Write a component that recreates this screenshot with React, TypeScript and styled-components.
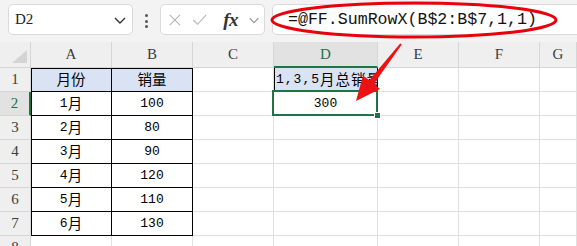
import React from "react";
import styled, { createGlobalStyle, css } from "styled-components";

const GREEN = "#217346";

const GlobalStyle = createGlobalStyle`
  html, body {
    margin: 0;
    padding: 0;
    background: #fff;
    overflow: hidden;
  }
  body {
    font-family: "Liberation Sans", "Noto Sans CJK SC", sans-serif;
  }
`;

const Page = styled.div`
  position: relative;
  width: 577px;
  height: 246px;
  overflow: hidden;
  background: #fff;
`;

/* ---------- formula bar ---------- */

const Toolbar = styled.div`
  display: flex;
  align-items: flex-start;
  height: 42px;
  padding: 4px 0 0 8px;
  box-sizing: border-box;
  background: #f3f3f3;
`;

const Box = styled.div`
  height: 31px;
  box-sizing: border-box;
  background: #fff;
  border: 1px solid #dadada;
  border-radius: 5px;
  display: flex;
  align-items: center;
`;

const NameBox = styled(Box)`
  width: 125px;
  padding: 0 5px 0 6px;
  justify-content: space-between;
  font-family: "Liberation Serif", serif;
  font-size: 15px;
  color: #222;
`;

const Dots = styled.div`
  width: 27px;
  display: flex;
  flex-direction: column;
  align-items: center;
  gap: 2.5px;
  padding-top: 10px;

  span {
    width: 3px;
    height: 3px;
    border-radius: 50%;
    background: #555;
  }
`;

const FuncBox = styled(Box)`
  width: 105px;
  margin-right: 7px;
  padding: 0 4px 0 7px;
  gap: 10px;
`;

const Fx = styled.span`
  font-family: "Liberation Serif", serif;
  font-style: italic;
  font-weight: bold;
  font-size: 19px;
  color: #333;
  margin-left: 6px;
  letter-spacing: -0.5px;
`;

const FormulaBox = styled(Box)`
  flex: 1;
  margin-right: -10px;
  padding-left: 15px;
  font-family: "Liberation Mono", monospace;
  font-size: 16.6px;
  color: #111;
  white-space: nowrap;
`;

const Chevron = ({ color }: { color: string }) => (
  <svg width="14" height="10" viewBox="0 0 14 10">
    <polyline points="2,3 7,8 12,3" fill="none" stroke={color} strokeWidth="1.4" />
  </svg>
);

/* ---------- sheet grid ---------- */

const Sheet = styled.div`
  display: grid;
  grid-template-columns: 31px 81px 81px 81px 104px 81px 81px 1fr;
  grid-template-rows: 26px repeat(8, 24px);
`;

const Head = styled.div<{ $active?: boolean; $row?: boolean }>`
  position: relative;
  box-sizing: border-box;
  background: #efefef;
  border-right: 1px solid #d6d6d6;
  border-bottom: 1px solid #d6d6d6;
  display: flex;
  align-items: center;
  justify-content: center;
  font-family: "Liberation Serif", serif;
  font-size: 15px;
  color: #3c3c3c;
  ${(p) =>
    p.$active &&
    css`
      background: #e2e2e2;
      color: ${GREEN};
    `}
  ${(p) =>
    p.$active && !p.$row &&
    css`
      border-bottom: 2px solid ${GREEN};
    `}
  ${(p) =>
    p.$active && p.$row &&
    css`
      border-right: 2px solid ${GREEN};
    `}
`;

const Corner = styled(Head)`
  &::after {
    content: "";
    position: absolute;
    right: 3px;
    bottom: 4px;
    width: 0;
    height: 0;
    border-left: 15px solid transparent;
    border-bottom: 13px solid #d4d4d4;
  }
`;

const Cell = styled.div<{
  $fill?: boolean;
  $boxed?: boolean;
  $left?: boolean;
  $top?: boolean;
  $selected?: boolean;
  $clip?: boolean;
}>`
  position: relative;
  box-sizing: border-box;
  border-right: 1px solid #e0e0e0;
  border-bottom: 1px solid #e0e0e0;
  display: flex;
  align-items: center;
  justify-content: ${(p) => (p.$clip ? "flex-start" : "center")};
  padding-left: ${(p) => (p.$clip ? "2px" : "0")};
  letter-spacing: ${(p) => (p.$clip ? "1px" : "0")};
  overflow: ${(p) => (p.$clip ? "hidden" : "visible")};
  white-space: nowrap;
  font-family: "Liberation Mono", monospace;
  font-size: 13px;
  color: #000;
  background: ${(p) => (p.$fill ? "#dae3f3" : "#fff")};
  ${(p) =>
    p.$boxed &&
    css`
      border-right-color: #000;
      border-bottom-color: #000;
    `}
  box-shadow: ${(p) =>
    [p.$left && "inset 1px 0 0 #000", p.$top && "inset 0 1px 0 #000"]
      .filter(Boolean)
      .join(", ") || "none"};
  ${(p) =>
    p.$selected &&
    css`
      z-index: 2;
      &::after {
        content: "";
        position: absolute;
        top: -2px;
        left: -2px;
        right: -1px;
        bottom: -1px;
        border: 2px solid ${GREEN};
      }
      &::before {
        content: "";
        position: absolute;
        right: -4px;
        bottom: -4px;
        width: 5px;
        height: 5px;
        background: ${GREEN};
        border: 1px solid #fff;
        z-index: 3;
      }
    `}
`;

const Han = styled.span`
  font-family: "Noto Sans CJK SC", sans-serif;
  font-size: 14.5px;
  line-height: 1;
`;

function Text({ value }: { value: string }) {
  return (
    <>
      {value.split(/([\u4e00-\u9fff]+)/).map((part, i) =>
        /[\u4e00-\u9fff]/.test(part) ? <Han key={i}>{part}</Han> : part
      )}
    </>
  );
}

const Overlay = styled.svg`
  position: absolute;
  top: 0;
  left: 0;
  pointer-events: none;
  z-index: 5;
`;

const columns = ["A", "B", "C", "D", "E", "F", "G"];

const table: [string, string][] = [
  ["月份", "销量"],
  ["1月", "100"],
  ["2月", "80"],
  ["3月", "90"],
  ["4月", "120"],
  ["5月", "110"],
  ["6月", "130"],
];

export default function App() {
  const rows = Array.from({ length: 8 }, (_, r) => r + 1);

  return (
    <Page>
      <GlobalStyle />
      <Toolbar>
        <NameBox>
          D2
          <Chevron color="#333" />
        </NameBox>
        <Dots>
          <span />
          <span />
          <span />
        </Dots>
        <FuncBox>
          <svg width="16" height="16" viewBox="0 0 16 16">
            <path d="M2 2L14 14M14 2L2 14" stroke="#b4b4b4" strokeWidth="1.3" />
          </svg>
          <svg width="18" height="16" viewBox="0 0 18 16">
            <polyline points="1.5,8 6.5,13 16.5,2" fill="none" stroke="#b4b4b4" strokeWidth="1.3" />
          </svg>
          <Fx>fx</Fx>
          <Chevron color="#999" />
        </FuncBox>
        <FormulaBox>=@FF.SumRowX(B$2:B$7,1,1)</FormulaBox>
      </Toolbar>

      <Sheet>
        <Corner />
        {columns.map((c) => (
          <Head key={c} $active={c === "D"}>
            {c}
          </Head>
        ))}
        {rows.map((r) => {
          const data = table[r - 1];
          return (
            <React.Fragment key={r}>
              <Head $row $active={r === 2}>
                {r}
              </Head>
              {columns.map((c, ci) => {
                const inTable = !!data && ci < 2;
                if (inTable) {
                  return (
                    <Cell
                      key={c}
                      $boxed
                      $fill={r === 1}
                      $left={ci === 0}
                      $top={r === 1}
                    >
                      <Text value={data[ci]} />
                    </Cell>
                  );
                }
                if (c === "D" && r === 1) {
                  return (
                    <Cell key={c} $boxed $fill $left $clip>
                      <Text value="1,3,5月总销量" />
                    </Cell>
                  );
                }
                if (c === "D" && r === 2) {
                  return (
                    <Cell key={c} $selected>
                      300
                    </Cell>
                  );
                }
                return <Cell key={c} />;
              })}
            </React.Fragment>
          );
        })}
      </Sheet>

      <Overlay width="577" height="246" viewBox="0 0 577 246">
        <ellipse cx="414" cy="20" rx="142" ry="17" fill="none" stroke="#e8000b" strokeWidth="3" />
        <polygon
          points="400.2,43.4 401.8,44.6 374,83.8 380,89 356,101 363,75.5 369.2,80.2"
          fill="#ee1111"
        />
      </Overlay>
    </Page>
  );
}
